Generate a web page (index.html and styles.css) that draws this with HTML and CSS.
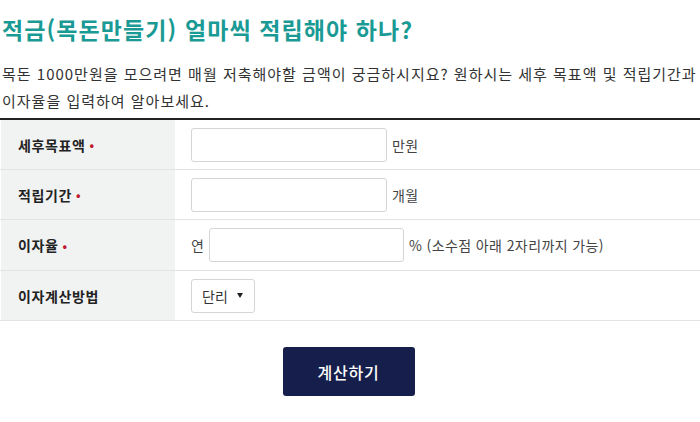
FILE: index.html
```html
<!DOCTYPE html>
<html lang="ko">
<head>
<meta charset="utf-8">
<link rel="stylesheet" href="styles.css">
</head>
<body>
<h1 class="title">적금(목돈만들기) 얼마씩 적립해야 하나?</h1>
<p class="desc">목돈 1000만원을 모으려면 매월 저축해야할 금액이 궁금하시지요? 원하시는 세후 목표액 및 적립기간과<br>이자율을 입력하여 알아보세요.</p>
<div class="form">
  <div class="row">
    <div class="label">세후목표액<span class="req">•</span></div>
    <div class="field"><input class="input" type="text"><span class="unit">만원</span></div>
  </div>
  <div class="row">
    <div class="label">적립기간<span class="req">•</span></div>
    <div class="field"><input class="input" type="text"><span class="unit">개월</span></div>
  </div>
  <div class="row row-tall">
    <div class="label">이자율<span class="req">•</span></div>
    <div class="field"><span class="pre">연</span><input class="input input-rate" type="text"><span class="unit">% (소수점 아래 2자리까지 가능)</span></div>
  </div>
  <div class="row">
    <div class="label">이자계산방법</div>
    <div class="field"><div class="select"><span>단리</span><span class="caret"></span></div></div>
  </div>
</div>
<div class="actions"><button class="btn" type="button">계산하기</button></div>
</body>
</html>
```
FILE: styles.css
```css
* { box-sizing: border-box; }
body {
  margin: 0;
  font-family: "Noto Sans CJK KR", "Noto Sans", sans-serif;
  color: #222;
  background: #fff;
}
.title {
  margin: 0;
  padding: 13px 0 0 2px;
  font-size: 23px;
  line-height: 32px;
  font-weight: 700;
  color: #1a9a95;
  letter-spacing: 1.1px;
}
.desc {
  margin: 0;
  padding: 15px 0 0 2px;
  font-size: 15px;
  line-height: 27px;
  color: #333;
  letter-spacing: 1px;
  white-space: nowrap;
}
.form {
  margin-top: 4px;
  border-top: 2px solid #222;
}
.row {
  display: flex;
  height: 50px;
  border-bottom: 1px solid #e3e3e3;
}
.row-tall { height: 51px; }
.label {
  width: 174px;
  margin-left: 1px;
  background: #f1f2f2;
  display: flex;
  align-items: center;
  padding-left: 17px;
  font-size: 14px;
  font-weight: 700;
  color: #222;
  letter-spacing: 0.6px;
}
.req {
  color: #c0182d;
  margin-left: 4px;
  font-size: 12px;
}
.field {
  display: flex;
  align-items: center;
  padding-left: 16px;
  font-size: 14px;
  color: #444;
}
.input {
  width: 196px;
  height: 34px;
  border: 1px solid #d5d5d5;
  border-radius: 3px;
  background: #fff;
  margin: 0;
}
.input-rate { width: 195px; }
.unit { margin-left: 5px; letter-spacing: 0.4px; }
.pre { margin-right: 5px; }
.select {
  width: 64px;
  height: 34px;
  border: 1px solid #d5d5d5;
  border-radius: 3px;
  display: flex;
  align-items: center;
  justify-content: space-between;
  padding: 0 11px 0 10px;
  font-size: 14px;
  color: #333;
}
.caret {
  width: 0;
  height: 0;
  border-left: 3px solid transparent;
  border-right: 3px solid transparent;
  border-top: 5px solid #222;
}
.actions {
  display: flex;
  justify-content: center;
  padding-top: 26px;
}
.btn {
  width: 132px;
  height: 49px;
  margin-left: -3px;
  border: 0;
  border-radius: 3px;
  background: #161e4b;
  color: #fff;
  font-family: inherit;
  font-size: 16px;
  font-weight: 500;
  letter-spacing: 0.8px;
}
```
